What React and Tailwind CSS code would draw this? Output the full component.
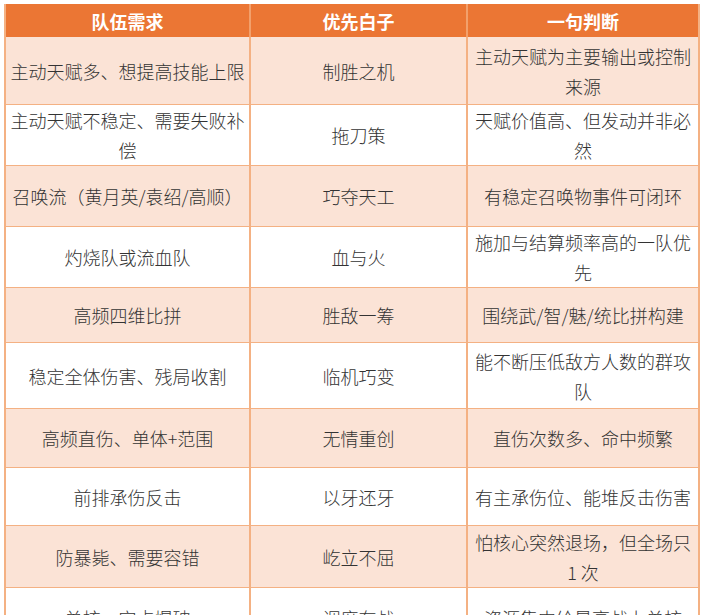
import React from "react";

const rows = [
  { h: "h-[68px]", c: ["主动天赋多、想提高技能上限", "制胜之机", "主动天赋为主要输出或控制来源"] },
  { h: "h-[61px]", c: ["主动天赋不稳定、需要失败补偿", "拖刀策", "天赋价值高、但发动并非必然"] },
  { h: "h-[61px]", c: ["召唤流（黄月英/袁绍/高顺）", "巧夺天工", "有稳定召唤物事件可闭环"] },
  { h: "h-[61px]", c: ["灼烧队或流血队", "血与火", "施加与结算频率高的一队优先"] },
  { h: "h-[55px]", c: ["高频四维比拼", "胜敌一筹", "围绕武/智/魅/统比拼构建"] },
  { h: "h-[66px]", c: ["稳定全体伤害、残局收割", "临机巧变", "能不断压低敌方人数的群攻队"] },
  { h: "h-[59px]", c: ["高频直伤、单体+范围", "无情重创", "直伤次数多、命中频繁"] },
  { h: "h-[58px]", c: ["前排承伤反击", "以牙还牙", "有主承伤位、能堆反击伤害"] },
  { h: "h-[62px]", c: ["防暴毙、需要容错", "屹立不屈", "怕核心突然退场，但全场只 1 次"] },
  { h: "h-[60px]", c: ["单核、定点爆破", "调度在战", "资源集中给最高战力单核"] },
];

export default function App() {
  return (
    <div
      className="bg-white min-h-screen pt-[4px] pl-[4px]"
      style={{ fontFamily: '"Noto Sans CJK SC", "Noto Sans", sans-serif' }}
    >
      <table className="table-fixed border-collapse w-[694px] text-[18px] leading-[30px] text-[#333333]">
        <colgroup>
          <col className="w-[245px]" />
          <col className="w-[217px]" />
          <col className="w-[232px]" />
        </colgroup>
        <thead>
          <tr className="h-[32px] bg-[#eb7634]">
            {["队伍需求", "优先白子", "一句判断"].map((t) => (
              <th
                key={t}
                className="border-x-2 border-y border-x-[#f2a06c] border-y-[#eb7634] first:border-l-[#f4b183] last:border-r-[#f4b183] text-white font-bold text-center align-middle px-[4px] leading-[24px]"
              >
                {t}
              </th>
            ))}
          </tr>
        </thead>
        <tbody>
          {rows.map((r, i) => (
            <tr key={i} className={`${r.h} ${i % 2 === 0 ? "bg-[#fbe3d6]" : "bg-white"}`}>
              {r.c.map((t, j) => (
                <td
                  key={j}
                  className="border-x-2 border-y border-[#f4b183] text-center align-middle px-[4px] font-light"
                >
                  {t}
                </td>
              ))}
            </tr>
          ))}
        </tbody>
      </table>
    </div>
  );
}
